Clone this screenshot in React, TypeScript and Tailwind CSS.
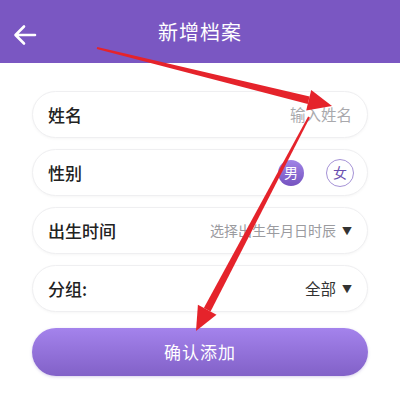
import React from "react";

const font = { fontFamily: '"Noto Sans CJK SC", "Noto Sans", sans-serif' };

function Row({ label, children }: { label: string; children?: React.ReactNode }) {
  return (
    <div className="flex h-[47px] items-center justify-between rounded-full border border-[#efeff1] bg-white pl-[15px] pr-[15px] shadow-[0_1px_3px_rgba(0,0,0,0.04)]">
      <span className="text-[17px] font-medium text-[#222]">{label}</span>
      <div className="flex items-center">{children}</div>
    </div>
  );
}

function Caret() {
  return <span className="ml-[6px] text-[10px] text-[#333]">▼</span>;
}

// tapered red arrow from (x1,y1) to tip (x2,y2)
function Arrow({ x1, y1, x2, y2 }: { x1: number; y1: number; x2: number; y2: number }) {
  const dx = x2 - x1;
  const dy = y2 - y1;
  const len = Math.hypot(dx, dy);
  const ux = dx / len;
  const uy = dy / len;
  const px = -uy;
  const py = ux;
  const head = 24;
  const hw = 10.5;
  const bx = x2 - ux * head;
  const by = y2 - uy * head;
  const shaft = [
    [x1 + px * 1, y1 + py * 1],
    [bx + px * 3.8, by + py * 3.8],
    [bx - px * 3.8, by - py * 3.8],
    [x1 - px * 1, y1 - py * 1],
  ];
  const tip = [
    [x2, y2],
    [bx + px * hw, by + py * hw],
    [bx - px * hw, by - py * hw],
  ];
  const pts = (a: number[][]) => a.map((p) => p.join(",")).join(" ");
  return (
    <g fill="#e5232b">
      <polygon points={pts(shaft)} />
      <polygon points={pts(tip)} />
    </g>
  );
}

export default function App() {
  return (
    <div className="relative h-[404px] w-[400px] overflow-hidden bg-white" style={font}>
      <header className="relative flex h-[63px] items-center justify-center bg-[#7a57c2]">
        <svg
          className="absolute left-[13px] top-[24px]"
          width="24"
          height="22"
          viewBox="0 0 24 22"
          fill="none"
          stroke="white"
          strokeWidth="2.6"
          strokeLinecap="round"
          strokeLinejoin="round"
        >
          <path d="M22 11H3M11 2.5L2.5 11L11 19.5" />
        </svg>
        <h1 className="text-[20px] tracking-[1px] text-white">新增档案</h1>
      </header>

      <div className="flex flex-col gap-[11px] px-[32px] pt-[28px]">
        <Row label="姓名">
          <span className="text-[15.5px] text-[#a9a9ad]">输入姓名</span>
        </Row>
        <Row label="性别">
          <span className="flex h-[26px] w-[26px] items-center justify-center rounded-full bg-gradient-to-b from-[#a084e6] to-[#7653c0] text-[14px] text-white">
            男
          </span>
          <span className="ml-[22px] mr-[-2px] flex h-[28px] w-[28px] items-center justify-center rounded-full border border-[#a592d6] text-[14px] text-[#6a4fb0]">
            女
          </span>
        </Row>
        <Row label="出生时间">
          <span className="text-[14px] text-[#9b9b9f]">选择出生年月日时辰</span>
          <Caret />
        </Row>
        <Row label="分组:">
          <span className="text-[15.5px] text-[#333]">全部</span>
          <Caret />
        </Row>

        <button className="mt-[5px] h-[48px] rounded-full bg-gradient-to-b from-[#a483ec] to-[#8261c8] text-[17px] tracking-[1px] text-white shadow-[0_1px_3px_rgba(100,70,180,0.25)]">
          确认添加
        </button>
      </div>

      <svg className="pointer-events-none absolute left-0 top-0" width="400" height="404">
        <Arrow x1={97} y1={48} x2={332} y2={106} />
        <Arrow x1={309} y1={117} x2={196} y2={331} />
      </svg>
    </div>
  );
}
